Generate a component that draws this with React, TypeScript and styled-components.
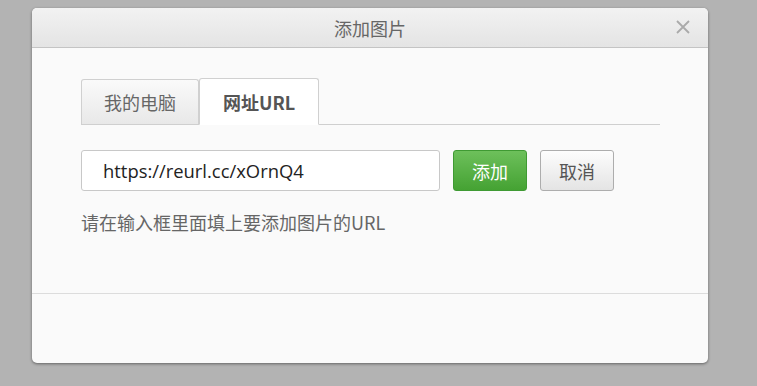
import { FC } from "react";
import styled, { createGlobalStyle } from "styled-components";

const GlobalStyle = createGlobalStyle`
    html, body {
        margin: 0;
        padding: 0;
        background: #b3b3b3;
        font-family: "Open Sans", "Noto Sans CJK SC", sans-serif;
    }
`;

const Page = styled.div`
    padding: 8px 0 0 32px;
    height: 378px;
`;

const Dialog = styled.div`
    width: 676px;
    height: 355px;
    background: #fafafa;
    border-radius: 5px;
    box-shadow: 0 1px 3px rgba(0, 0, 0, 0.45);
    display: flex;
    flex-direction: column;
    overflow: hidden;
`;

const Header = styled.div`
    height: 39px;
    flex: none;
    display: flex;
    align-items: center;
    justify-content: center;
    position: relative;
    background: linear-gradient(#f2f2f2, #e4e4e4);
    border-bottom: 1px solid #c4c4c4;
`;

const Title = styled.span`
    font-family: "Noto Sans CJK SC", sans-serif;
    font-size: 18px;
    color: #666;
`;

const Close = styled.button`
    position: absolute;
    right: 16px;
    top: 10px;
    width: 18px;
    height: 18px;
    padding: 0;
    border: 0;
    background: none;
    display: flex;
    align-items: center;
    justify-content: center;
`;

const Body = styled.div`
    height: 246px;
    flex: none;
    padding: 30px 48px 0 49px;
    box-sizing: border-box;
    border-bottom: 1px solid #dcdcdc;
`;

const TabBar = styled.div`
    display: flex;
    border-bottom: 1px solid #cfcfcf;
`;

const Tab = styled.div<{ $active?: boolean }>`
    width: 118px;
    height: 46px;
    display: flex;
    align-items: center;
    justify-content: center;
    box-sizing: border-box;
    margin-bottom: -1px;
    font-family: "Noto Sans CJK SC", sans-serif;
    font-size: 18px;
    border: 1px solid #d0d0d0;
    border-radius: 3px 3px 0 0;
    color: ${(p) => (p.$active ? "#555" : "#666")};
    font-weight: ${(p) => (p.$active ? 700 : 400)};
    background: ${(p) => (p.$active ? "#fff" : "linear-gradient(#fafafa, #e8e8e8)")};
    border-bottom-color: ${(p) => (p.$active ? "#fff" : "#cfcfcf")};
    ${(p) => (p.$active ? "width: 120px; height: 47px;" : "margin-top: 1px;")}
`;

const Row = styled.div`
    display: flex;
    gap: 13px;
    margin-top: 25px;
`;

const UrlInput = styled.input`
    width: 359px;
    height: 41px;
    box-sizing: border-box;
    border: 1px solid #c8c8c8;
    border-radius: 3px;
    background: #fff;
    padding: 0 21px;
    font-family: "Open Sans", sans-serif;
    font-size: 18.4px;
    color: #222;
    outline: none;
`;

const Button = styled.button<{ $primary?: boolean }>`
    width: 74px;
    height: 41px;
    box-sizing: border-box;
    border-radius: 3px;
    font-family: "Noto Sans CJK SC", sans-serif;
    font-size: 18px;
    padding: 0;
    border: 1px solid ${(p) => (p.$primary ? "#3f9a33" : "#adadad")};
    color: ${(p) => (p.$primary ? "#fff" : "#555")};
    background: ${(p) =>
        p.$primary ? "linear-gradient(#6dc05b, #45a233)" : "linear-gradient(#fdfdfd, #e4e4e4)"};
`;

const Hint = styled.p`
    margin: 18px 0 0;
    font-family: "Noto Sans CJK SC", sans-serif;
    font-size: 18px;
    line-height: 26px;
    color: #666;
`;

const App: FC = () => (
    <>
        <GlobalStyle />
        <Page>
            <Dialog>
                <Header>
                    <Title>添加图片</Title>
                    <Close aria-label="close">
                        <svg width="14" height="14" viewBox="0 0 14 14">
                            <path d="M1 1L13 13M13 1L1 13" stroke="#aaa" strokeWidth="1.8" />
                        </svg>
                    </Close>
                </Header>
                <Body>
                    <TabBar>
                        <Tab>我的电脑</Tab>
                        <Tab $active>网址URL</Tab>
                    </TabBar>
                    <Row>
                        <UrlInput defaultValue="https://reurl.cc/xOrnQ4" />
                        <Button $primary>添加</Button>
                        <Button>取消</Button>
                    </Row>
                    <Hint>请在输入框里面填上要添加图片的URL</Hint>
                </Body>
            </Dialog>
        </Page>
    </>
);

export default App;
